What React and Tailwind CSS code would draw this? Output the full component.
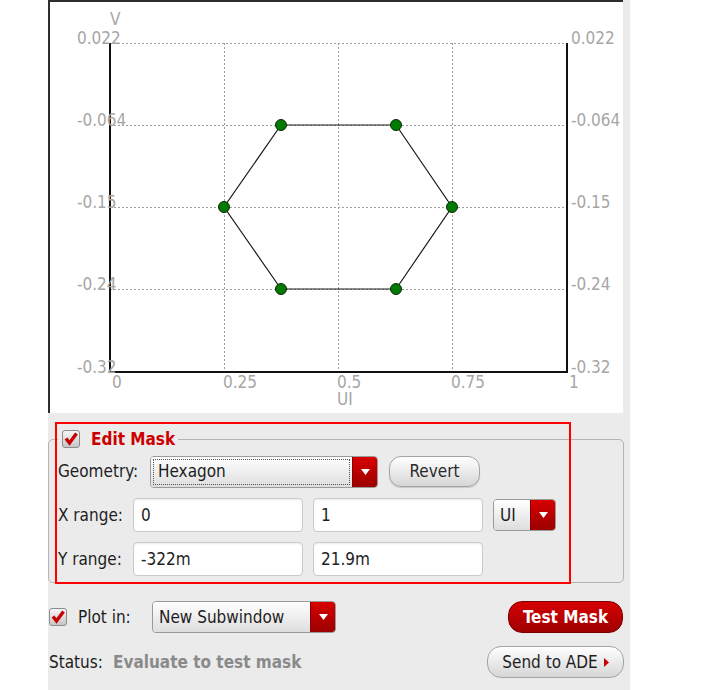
import React from 'react';

const FONT = "font-['DejaVu_Sans_Condensed','DejaVu_Sans',sans-serif] font-stretch-condensed";

const hexagon = [[281, 125], [396, 125], [452, 207], [396, 289], [281, 289], [224, 207]];
const yTicks = [
  { y: 43, label: '0.022' },
  { y: 125, label: '-0.064' },
  { y: 207, label: '-0.15' },
  { y: 289, label: '-0.24' },
  { y: 372, label: '-0.32' },
];
const xTicks = [
  { x: 110, tx: 112, label: '0' },
  { x: 224, tx: 223, label: '0.25' },
  { x: 338, tx: 337, label: '0.5' },
  { x: 452, tx: 451, label: '0.75' },
  { x: 567, tx: 569, label: '1' },
];

function Check({ className = '' }) {
  return (
    <span className={`inline-flex w-[18px] h-[18px] shrink-0 items-center justify-center rounded-[3px] border border-[#8c8c8c] bg-linear-to-b from-[#f6f6f6] to-[#c6c6c6] ${className}`}>
      <svg width="14" height="14" viewBox="0 0 14 14">
        <path d="M2 6.5 L5.5 11 L12.5 1.5" fill="none" stroke="#c80000" strokeWidth="3.4" />
      </svg>
    </span>
  );
}

function Arrow() {
  return (
    <span className="flex w-[25px] shrink-0 items-center justify-center bg-linear-to-b from-[#d80000] to-[#9c0000] border-l border-[#8a0000]">
      <svg width="9" height="6" viewBox="0 0 9 6">
        <path d="M0 0 L9 0 L4.5 6 Z" fill="#ffffff" />
      </svg>
    </span>
  );
}

function Combo({ value, className = '', focus = false }) {
  return (
    <div className={`flex h-[32px] overflow-hidden rounded-[4px] border border-[#9a9a9a] ${className}`}>
      <div className="flex flex-1 items-center bg-linear-to-b from-[#ffffff] to-[#dedede] p-[2px]">
        <div className={`flex h-full w-full items-center pl-[4px] ${focus ? 'border border-dotted border-[#555]' : ''}`}>
          {value}
        </div>
      </div>
      <Arrow />
    </div>
  );
}

function Field({ value, className = '' }) {
  return (
    <div className={`flex h-[34px] items-center rounded-[4px] border border-[#cacaca] bg-white pl-[7px] shadow-[inset_0_1px_2px_rgba(0,0,0,0.08)] ${className}`}>
      {value}
    </div>
  );
}

function Plot() {
  return (
    <svg width="573" height="411" viewBox="50 2 573 411" className="block">
      {/* grid */}
      <g stroke="#9c9c9c" strokeWidth="1" strokeDasharray="2 2" shapeRendering="crispEdges">
        {yTicks.map((t) => (
          <line key={t.label} x1="110" x2="567" y1={t.y + 0.5} y2={t.y + 0.5} />
        ))}
        {xTicks.slice(1, 4).map((t) => (
          <line key={t.label} x1={t.x + 0.5} x2={t.x + 0.5} y1="43" y2="372" />
        ))}
      </g>
      {/* axes */}
      <path d="M110 43 L110 372 L567 372 L567 43" fill="none" stroke="#111" strokeWidth="2" shapeRendering="crispEdges" />
      {/* mask */}
      <polygon points={hexagon.map((p) => p.join(',')).join(' ')} fill="none" stroke="#1a1a1a" strokeWidth="1.2" />
      {hexagon.map(([x, y]) => (
        <circle key={`${x}-${y}`} cx={x} cy={y} r="5.5" fill="#007a00" stroke="#0b2a0b" strokeWidth="1" />
      ))}
      {/* labels */}
      <g fill="#a6a6a6" fontSize="17">
        <text x="110" y="25">V</text>
        {yTicks.map((t) => (
          <text key={`l${t.label}`} x="77" y={t.y + 1}>{t.label}</text>
        ))}
        {yTicks.map((t) => (
          <text key={`r${t.label}`} x="571" y={t.y + 1}>{t.label}</text>
        ))}
        {xTicks.map((t) => (
          <text key={`x${t.label}`} x={t.tx} y="388">{t.label}</text>
        ))}
        <text x="337" y="405">UI</text>
      </g>
    </svg>
  );
}

export default function App() {
  return (
    <div className={`w-[722px] h-[690px] bg-white text-[17px] leading-none text-[#1e1e1e] ${FONT}`}>
      <div className="relative ml-[48px] h-[690px] w-[582px] bg-[#ebebeb]">
        <div className="h-[413px] w-[575px] border-l-2 border-t-2 border-[#2e2e2e] bg-white">
          <Plot />
        </div>

        <fieldset className="mt-[16px] w-[576px] rounded-[5px] border border-[#b4b4b4] pb-[6px] pl-[9px]">
          <legend className="flex h-[20px] items-center pl-[4px] pr-[3px]">
            <Check />
            <span className="ml-[11px] font-bold text-[#cc0000]">Edit Mask</span>
          </legend>

          <div className="mt-[7px] flex h-[31px] items-center">
            <span className="w-[92px]">Geometry:</span>
            <Combo value="Hexagon" focus className="h-[31px] w-[228px]" />
            <button className="ml-[11px] h-[31px] w-[91px] rounded-[12px] border border-[#a4a4a4] bg-linear-to-b from-[#ffffff] to-[#d6d6d6] text-[#2a2a2a] shadow-[0_1px_1px_rgba(0,0,0,0.15)]">
              Revert
            </button>
          </div>

          <div className="mt-[11px] flex items-center">
            <span className="w-[75px]">X range:</span>
            <Field value="0" className="w-[170px]" />
            <Field value="1" className="ml-[10px] w-[170px]" />
            <Combo value="UI" className="ml-[10px] w-[63px]" />
          </div>

          <div className="mt-[10px] flex items-center">
            <span className="w-[75px]">Y range:</span>
            <Field value="-322m" className="w-[170px]" />
            <Field value="21.9m" className="ml-[10px] w-[170px]" />
          </div>
        </fieldset>

        <div className="mt-[18px] flex h-[32px] items-center pl-[1px] pr-[7px]">
          <Check />
          <span className="ml-[11px] w-[74px]">Plot in:</span>
          <Combo value="New Subwindow" className="w-[184px]" />
          <button className="ml-auto h-[32px] w-[115px] rounded-[14px] border border-[#7a0000] bg-linear-to-b from-[#d60000] to-[#a00000] font-bold text-white">
            Test Mask
          </button>
        </div>

        <div className="mt-[13px] flex h-[32px] items-center pl-[1px] pr-[6px]">
          <span className="w-[64px]">Status:</span>
          <span className="font-bold text-[#8a8a8a]">Evaluate to test mask</span>
          <button className="ml-auto flex h-[32px] w-[137px] items-center justify-center gap-[6px] rounded-[14px] border border-[#a4a4a4] bg-linear-to-b from-[#ffffff] to-[#d6d6d6] text-[#1e1e1e]">
            <span>Send to ADE</span>
            <svg width="5" height="9" viewBox="0 0 5 9">
              <path d="M0 0 L5 4.5 L0 9 Z" fill="#cc0000" />
            </svg>
          </button>
        </div>

        {/* annotation box */}
        <div className="pointer-events-none absolute left-[7px] top-[422px] h-[162px] w-[516px] border-2 border-[#ff0000]" />
      </div>
    </div>
  );
}
